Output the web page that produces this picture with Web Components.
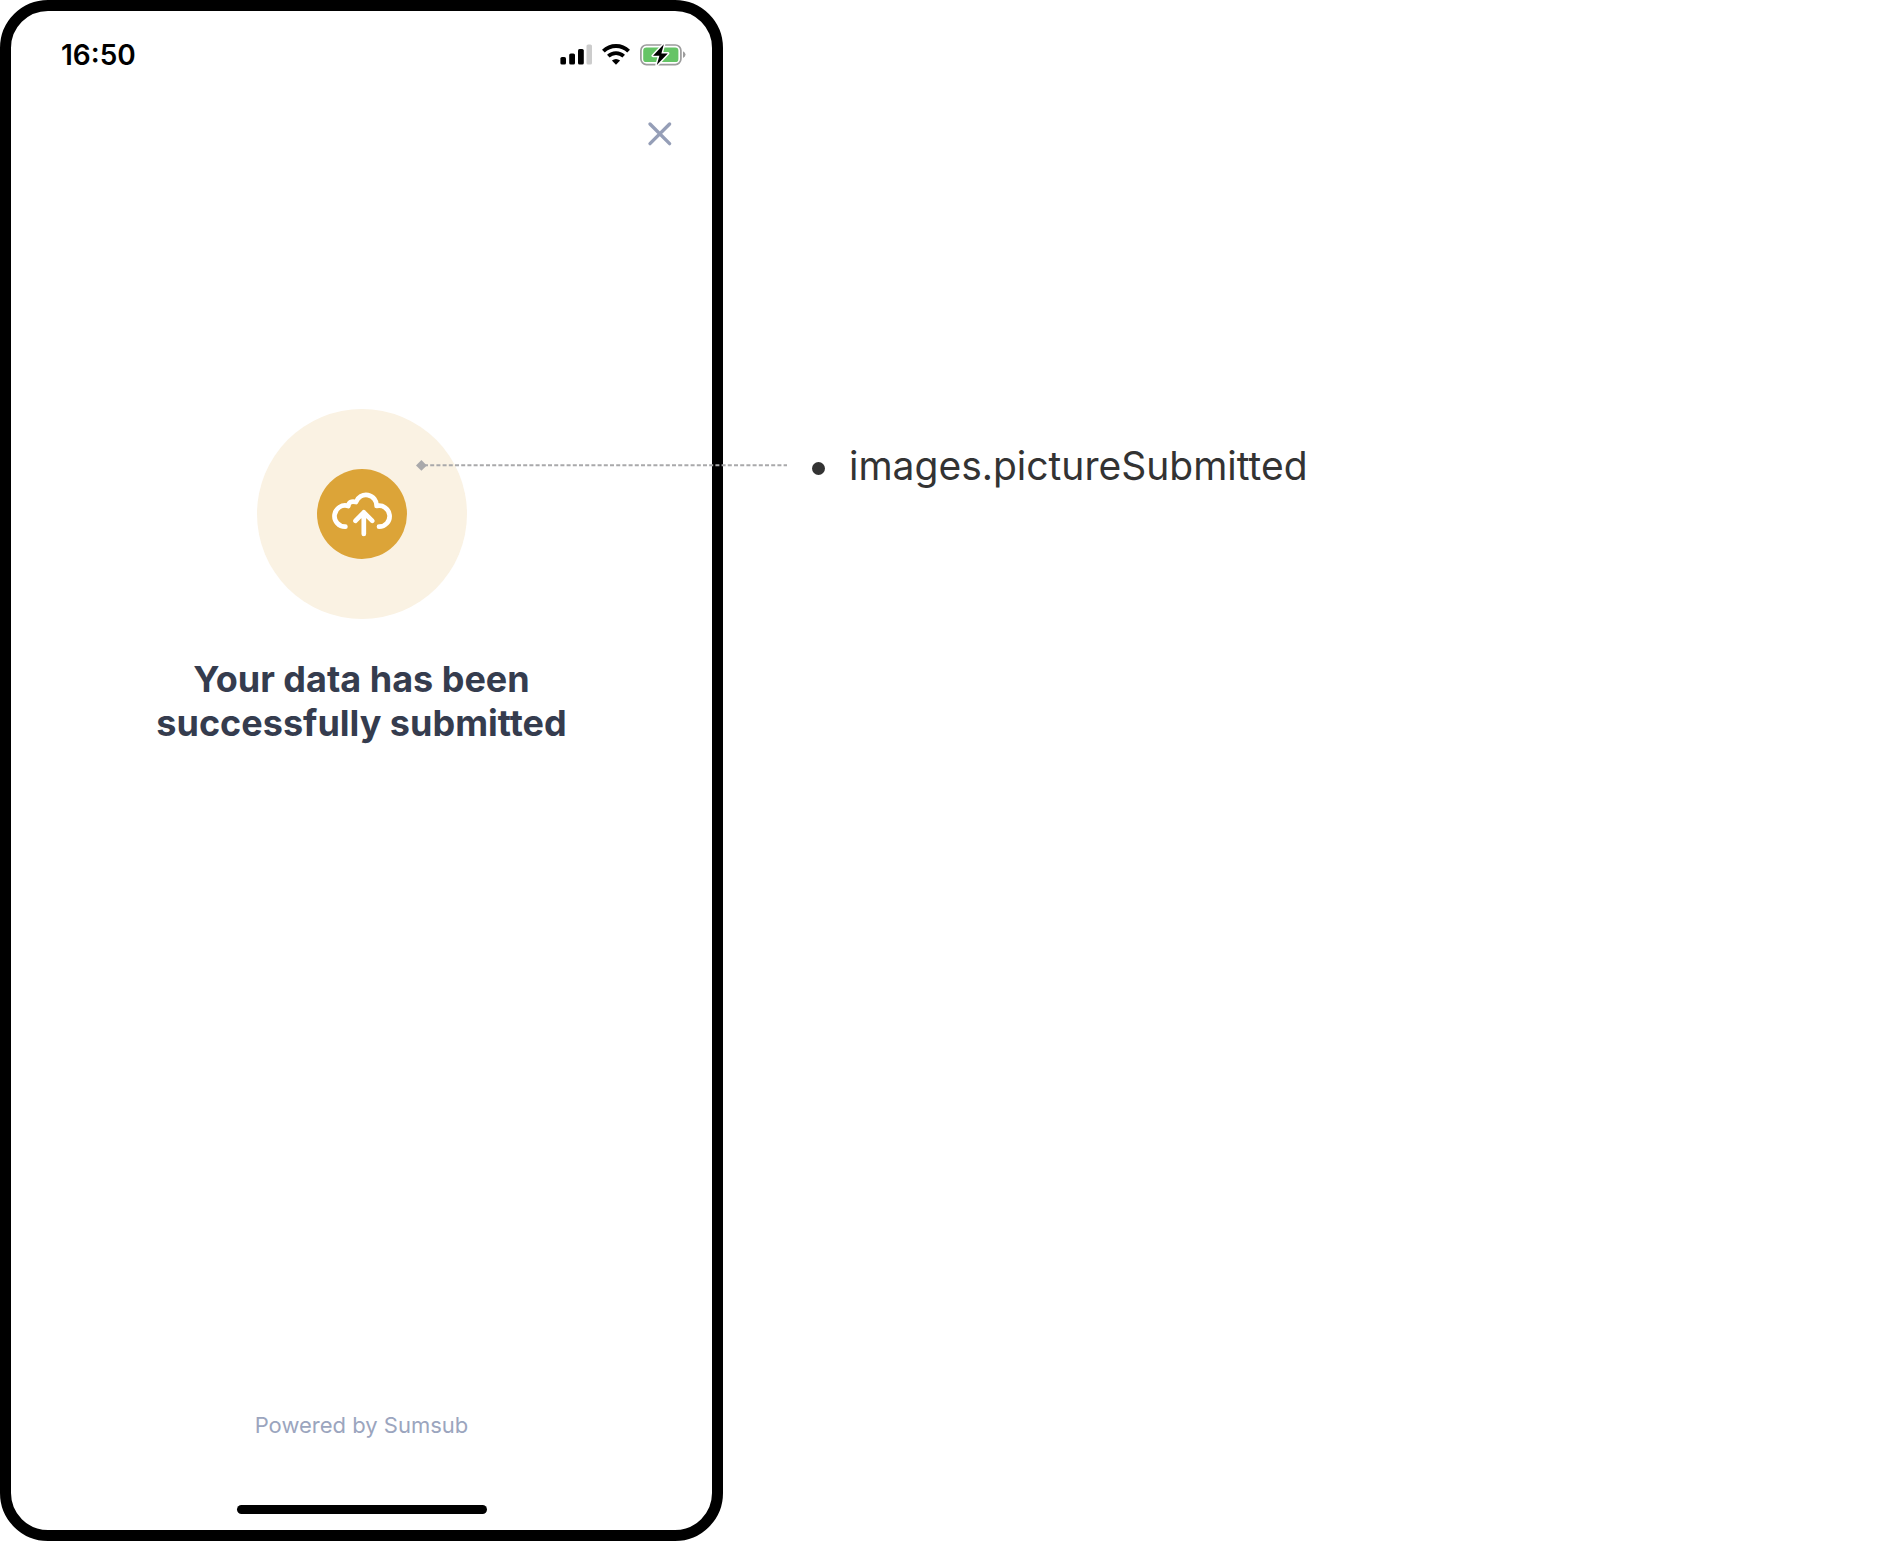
<!DOCTYPE html>
<html lang="en">
<head>
<meta charset="utf-8">
<meta name="viewport" content="width=device-width, initial-scale=1">
<title>images.pictureSubmitted</title>
<style>
  body { margin: 0; background: #fff; font-family: Inter, "Liberation Sans", sans-serif; }
</style>
</head>
<body>
<theme-guide>
  <phone-frame>
    <status-bar slot="status">16:50</status-bar>
    <close-button></close-button>
    <submitted-state>Your data has been successfully submitted</submitted-state>
    <powered-by slot="footer">Powered by Sumsub</powered-by>
  </phone-frame>
  <callout-note slot="notes">images.pictureSubmitted</callout-note>
</theme-guide>
<script>
  const define = (name, html) => {
    const template = document.createElement('template');
    template.innerHTML = html;
    customElements.define(name, class extends HTMLElement {
      constructor() {
        super();
        this.attachShadow({ mode: 'open' }).append(template.content.cloneNode(true));
      }
    });
  };

  define('theme-guide', `
    <style>
      :host { display: flex; gap: 64px; min-height: 100vh; }
      main { display: flex; }
      aside { flex: 1; padding-top: 442px; }
    </style>
    <main><slot></slot></main>
    <aside><slot name="notes"></slot></aside>`);

  define('phone-frame', `
    <style>
      :host { display: flex; flex-direction: column; box-sizing: border-box; width: 723px;
              border: 11px solid #000; border-radius: 48px; background: #fff; }
      section { flex: 1; display: flex; flex-direction: column; }
      .home { width: 250px; height: 9px; margin: 64px auto 16px; border-radius: 5px; background: #000; }
    </style>
    <slot name="status"></slot>
    <section><slot></slot></section>
    <slot name="footer"></slot>
    <div class="home"></div>`);

  define('status-bar', `
    <style>
      :host { display: flex; align-items: center; justify-content: space-between;
              padding: 28px 26px 0 50px; color: #000; font-size: 28px; line-height: 32px; font-weight: 600; }
      .icons { display: flex; gap: 10px; }
      svg { display: block; height: 22px; }
    </style>
    <time><slot></slot></time>
    <div class="icons">
      <svg width="32" height="22" viewBox="0 1 32 22" aria-hidden="true">
        <rect x="0.4" y="14" width="5.6" height="7.5" rx="1.6"/>
        <rect x="9.2" y="10.5" width="5.8" height="11" rx="1.6"/>
        <rect x="18" y="6" width="5.8" height="15.5" rx="1.6"/>
        <rect x="26.5" y="1.5" width="5.5" height="20" rx="1.6" fill="#ccc"/>
      </svg>
      <svg width="28" height="22" viewBox="0 1 28 22" aria-hidden="true">
        <path d="M1.4 8.2A18 18 0 0 1 26.6 8.2" fill="none" stroke="#000" stroke-width="3.9"/>
        <path d="M6.3 13.2A11.2 11.2 0 0 1 21.7 13.2" fill="none" stroke="#000" stroke-width="3.7"/>
        <path d="M14 21.8L9.9 17.6Q14 14.2 18.1 17.6Z"/>
      </svg>
      <svg width="46" height="22" viewBox="0 1 46 22" aria-hidden="true">
        <rect x=".9" y="2" width="40" height="19.6" rx="5.6" fill="#fff" stroke="#9c9c9c" stroke-width="1.7"/>
        <rect x="3.2" y="4.5" width="35.2" height="14.6" rx="3.2" fill="#65c466"/>
        <path d="M43 8.3Q45.5 9.5 45.5 11.6T43 14.9Z" fill="#9c9c9c"/>
        <path d="M23.8 1.3L13 12.7H19.4L16.8 22.1L27.8 10.4H21.4Z" fill="#000" stroke="#fff" stroke-width="3" paint-order="stroke" stroke-linejoin="round"/>
      </svg>
    </div>`);

  define('close-button', `
    <style>
      :host { display: flex; justify-content: flex-end; padding: 39px 28px 0 0; }
      button { display: block; padding: 4px; border: 0; background: none; color: #959eb7; }
      svg { display: block; }
    </style>
    <button type="button" aria-label="Close">
      <svg width="40" height="40" viewBox="0 0 40 40" aria-hidden="true">
        <path d="M10 10L29.6 29.6M29.6 10L10 29.6" fill="none" stroke="currentColor" stroke-width="3.4" stroke-linecap="round"/>
      </svg>
    </button>`);

  define('submitted-state', `
    <style>
      :host { display: flex; flex-direction: column; align-items: center; gap: 38px; padding-top: 251px; }
      .halo { display: grid; place-items: center; width: 210px; height: 210px; border-radius: 50%; background: #faf2e3; }
      .disc { display: block; width: 90px; height: 90px; border-radius: 50%; background: #dca438; }
      h1 { max-width: 440px; margin: 0; color: #353c4e; text-align: center;
           font-size: 36px; line-height: 44px; font-weight: 700; }
    </style>
    <div class="halo">
      <svg class="disc" viewBox="0 0 90 90" fill="none" stroke="#fff" stroke-width="4.7" stroke-linecap="round" stroke-linejoin="round" aria-hidden="true">
        <path d="M28.4 57.7A10.6 10.6 0 1 1 31.3 37Q31.9 31.3 39 33A10.6 10.6 0 0 1 59.6 37A10.5 10.5 0 1 1 62 57.7"/>
        <path d="M46.8 65V43.3M38.4 51.8L46.8 43.3L55.3 51.8"/>
      </svg>
    </div>
    <h1><slot></slot></h1>`);

  define('powered-by', `
    <style>
      :host { display: block; color: #9ba5be; text-align: center; font-size: 22px; line-height: 32px; }
    </style>
    <slot></slot>`);

  define('callout-note', `
    <style>
      :host { display: block; position: relative; color: #333; font-size: 39px; line-height: 48px; }
      .leader { position: absolute; right: 100%; top: 18px; display: block; }
      ul { margin: 0; padding: 0 0 0 25px; list-style: none; }
      li { display: flex; align-items: center; gap: 24px; }
      li::before { content: ""; flex: none; width: 13px; height: 13px; margin-top: 4px; border-radius: 50%; background: #333; }
    </style>
    <svg class="leader" width="371" height="11" viewBox="0 0 371 11" aria-hidden="true">
      <path d="M5.4 0L10.8 5.4L5.4 10.8L0 5.4Z" fill="#a9a9ab"/>
      <path d="M8 5.2H371" stroke="#a9a9ab" stroke-width="2" stroke-dasharray="4 2.2"/>
    </svg>
    <ul><li><span><slot></slot></span></li></ul>`);
</script>
</body>
</html>
